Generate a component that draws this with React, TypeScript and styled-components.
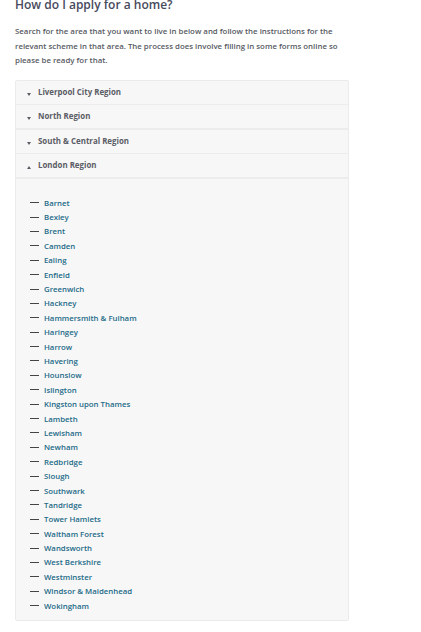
import React from "react";
import styled, { createGlobalStyle } from "styled-components";

const Global = createGlobalStyle`
  html, body { margin: 0; padding: 0; background: #fff; }
  body { font-family: "Open Sans", "Liberation Sans", sans-serif; overflow: hidden; }
`;

const Page = styled.div`
  padding: 0 72px 0 15px;
  display: flex;
  flex-direction: column;
`;

const Title = styled.h2`
  margin: -3px 0 0;
  font-family: "Open Sans", sans-serif;
  font-size: 12px;
  line-height: 15px;
  font-weight: 600;
  color: #474a5c;
`;

const Intro = styled.p`
  margin: 12px 0 0;
  font-size: 7.85px;
  line-height: 14.5px;
  font-weight: 600;
  color: #575a63;
`;

const Panel = styled.div`
  margin-top: 12px;
  background: #f7f7f7;
  border: 1px solid #ebebeb;
  border-radius: 2px;
  display: flex;
  flex-direction: column;
`;

const Header = styled.div<{ $thick?: boolean }>`
  height: 23px;
  display: flex;
  align-items: center;
  gap: 7px;
  padding-left: 11px;
  border-bottom: ${(p) => (p.$thick ? "2px" : "1px")} solid #ececec;
  font-size: 7.9px;
  font-weight: 700;
  color: #5b5d66;
`;

const Caret = styled.span<{ $up?: boolean }>`
  width: 0;
  height: 0;
  margin-top: 5px;
  border-left: 2.5px solid transparent;
  border-right: 2.5px solid transparent;
  ${(p) =>
    p.$up
      ? "border-bottom: 3px solid #5b5d66;"
      : "border-top: 3px solid #5b5d66;"}
`;

const List = styled.ul`
  list-style: none;
  margin: 0;
  padding: 17px 0 7px 14px;
  display: flex;
  flex-direction: column;
`;

const Item = styled.li`
  height: 14.4px;
  display: flex;
  align-items: center;
  gap: 4px;
  font-size: 7.8px;
  font-weight: 600;
`;

const Dash = styled.span`
  width: 9px;
  height: 1px;
  background: #444;
  margin-right: 1px;
`;

const Link = styled.a`
  color: #1c6a88;
  text-decoration: none;
`;

const regions = [
  { name: "Liverpool City Region", thick: false },
  { name: "North Region", thick: true },
  { name: "South & Central Region", thick: false },
];

const boroughs = [
  "Barnet",
  "Bexley",
  "Brent",
  "Camden",
  "Ealing",
  "Enfield",
  "Greenwich",
  "Hackney",
  "Hammersmith & Fulham",
  "Haringey",
  "Harrow",
  "Havering",
  "Hounslow",
  "Islington",
  "Kingston upon Thames",
  "Lambeth",
  "Lewisham",
  "Newham",
  "Redbridge",
  "Slough",
  "Southwark",
  "Tandridge",
  "Tower Hamlets",
  "Waltham Forest",
  "Wandsworth",
  "West Berkshire",
  "Westminster",
  "Windsor & Maidenhead",
  "Wokingham",
];

export default function App() {
  return (
    <>
      <Global />
      <Page>
        <Title>How do I apply for a home?</Title>
        <Intro>
          Search for the area that you want to live in below and follow the instructions for the
          relevant scheme in that area. The process does involve filling in some forms online so
          please be ready for that.
        </Intro>
        <Panel>
          {regions.map((r) => (
            <Header key={r.name} $thick={r.thick}>
              <Caret />
              {r.name}
            </Header>
          ))}
          <Header $thick>
            <Caret $up />
            London Region
          </Header>
          <List>
            {boroughs.map((b) => (
              <Item key={b}>
                <Dash />
                <Link href="#">{b}</Link>
              </Item>
            ))}
          </List>
        </Panel>
      </Page>
    </>
  );
}
